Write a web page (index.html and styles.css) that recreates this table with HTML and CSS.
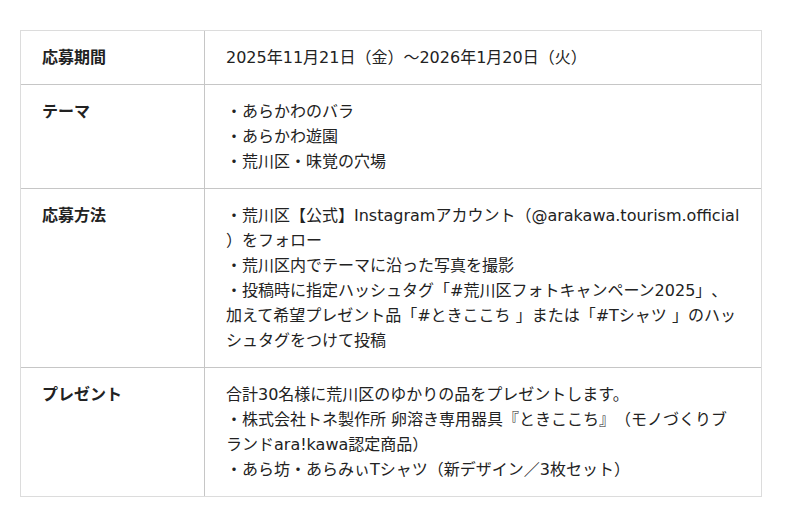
FILE: index.html
```html
<!DOCTYPE html>
<html lang="ja">
<head>
<meta charset="utf-8">
<link rel="stylesheet" href="styles.css">
</head>
<body>
<div class="wrap">
  <div class="info">
    <div class="row">
      <div class="label">応募期間</div>
      <div class="value">2025年11月21日（金）～2026年1月20日（火）</div>
    </div>
    <div class="row">
      <div class="label">テーマ</div>
      <div class="value">・あらかわのバラ<br>・あらかわ遊園<br>・荒川区・味覚の穴場</div>
    </div>
    <div class="row">
      <div class="label">応募方法</div>
      <div class="value">・荒川区【公式】Instagramアカウント（@arakawa.tourism.official）をフォロー<br>・荒川区内でテーマに沿った写真を撮影<br>・投稿時に指定ハッシュタグ「#荒川区フォトキャンペーン2025」、加えて希望プレゼント品「#ときここち 」または「#Tシャツ 」のハッシュタグをつけて投稿</div>
    </div>
    <div class="row">
      <div class="label">プレゼント</div>
      <div class="value">合計30名様に荒川区のゆかりの品をプレゼントします。<br>・株式会社トネ製作所 卵溶き専用器具『ときここち』（モノづくりブランドara!kawa認定商品）<br>・あら坊・あらみぃTシャツ（新デザイン／3枚セット）</div>
    </div>
  </div>
</div>
</body>
</html>
```

FILE: styles.css
```css
html, body {
  margin: 0;
  padding: 0;
  background: #fff;
}
body {
  font-family: "DejaVu Sans", "Noto Sans CJK JP", sans-serif;
  font-size: 16px;
  line-height: 25px;
  color: #222;
  text-spacing-trim: space-all;
}
.wrap {
  padding: 30px 38px 0 20px;
}
.info {
  border: 1px solid #dcdcdc;
  width: 740px;
}
.row {
  display: grid;
  grid-template-columns: 184px 1fr;
}
.row + .row {
  border-top: 1px solid #c6c6c6;
}
.label {
  font-weight: bold;
  padding: 14px 21px;
  border-right: 1px solid #c6c6c6;
  box-sizing: border-box;
}
.value {
  padding: 14px 21px;
  word-break: break-all;
  line-break: anywhere;
}
```
